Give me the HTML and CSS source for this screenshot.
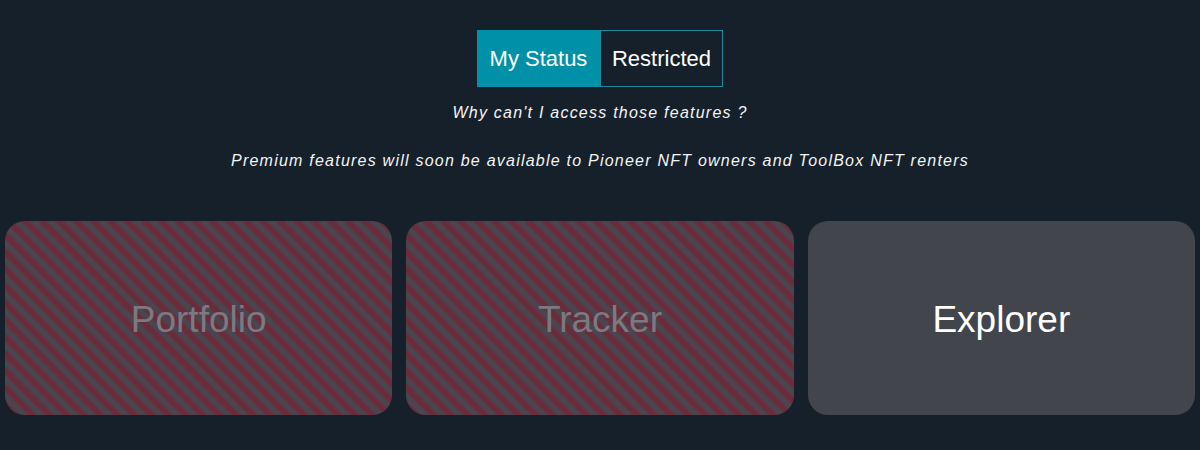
FILE: index.html
```html
<!DOCTYPE html>
<html>
<head>
<meta charset="utf-8">
<link rel="stylesheet" href="styles.css">
</head>
<body>
<div class="page">
  <div class="toggle">
    <button class="tab active">My Status</button>
    <button class="tab">Restricted</button>
  </div>
  <p class="why">Why can't I access those features ?</p>
  <p class="note">Premium features will soon be available to Pioneer NFT owners and ToolBox NFT renters</p>
  <div class="cards">
    <div class="card locked">Portfolio</div>
    <div class="card locked">Tracker</div>
    <div class="card open">Explorer</div>
  </div>
</div>
</body>
</html>
```
FILE: styles.css
```css
html, body {
  margin: 0;
  padding: 0;
  background: #15202a;
  font-family: "Liberation Sans", Arial, sans-serif;
  color: #fff;
}
.page {
  display: flex;
  flex-direction: column;
  align-items: center;
  padding-top: 30px;
}
.toggle {
  display: flex;
}
.tab {
  font-family: "Liberation Sans", Arial, sans-serif;
  font-size: 22px;
  color: #fff;
  height: 57px;
  padding: 0 11px;
  border: 1px solid #1a8a9c;
  background: #15202a;
  margin: 0;
}
.tab.active {
  background: #0091a9;
  border-color: #0091a9;
  width: 123px;
}
.why, .note {
  margin: 0;
  font-style: italic;
  font-size: 16px;
  letter-spacing: 1.23px;
  color: #f4f4f4;
}
.why {
  margin-top: 17px;
}
.note {
  margin-top: 30px;
}
.cards {
  align-self: stretch;
  display: flex;
  gap: 14px;
  padding: 0 5px;
  margin-top: 51px;
}
.card {
  flex: 1;
  height: 194px;
  box-sizing: border-box;
  padding-top: 4px;
  border-radius: 20px;
  display: flex;
  align-items: center;
  justify-content: center;
  font-size: 37px;
}
.card.locked {
  color: #7b7a82;
  background: repeating-linear-gradient(45deg, #4a4650 0px, #4a4650 3px, #6c2a3a 6px, #6c2a3a 9px, #4a4650 12px);
}
.card.open {
  background: #43454d;
  color: #fff;
}
```
